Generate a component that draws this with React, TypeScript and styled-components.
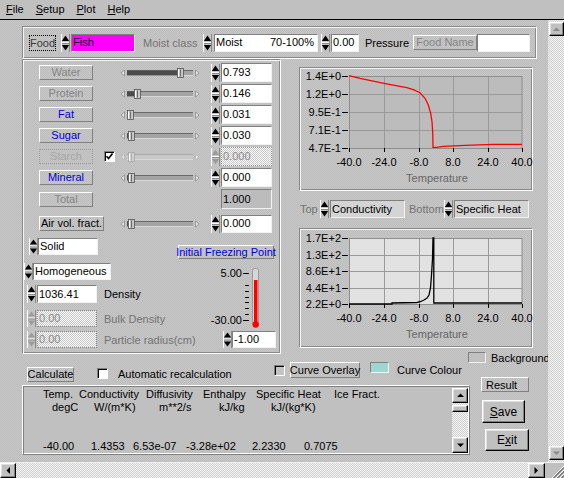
import React from "react";
import styled, { createGlobalStyle, css } from "styled-components";

type Box = { $ml?: number; $mt?: number; $w?: number; $h?: number };
const boxCss = css<Box>`
  ${(p) => (p.$ml !== undefined ? `margin-left: ${p.$ml}px;` : "")}
  ${(p) => (p.$mt !== undefined ? `margin-top: ${p.$mt}px;` : "")}
  ${(p) => (p.$w !== undefined ? `width: ${p.$w}px;` : "")}
  ${(p) => (p.$h !== undefined ? `height: ${p.$h}px;` : "")}
`;

const Global = createGlobalStyle`
  html, body { margin: 0; padding: 0; background: #c0c0c0; overflow: hidden; }
  body { font-family: "Liberation Sans", Arial, sans-serif; font-size: 11px; color: #000; }
  *, *::before, *::after { box-sizing: border-box; }
`;

const stipple = css`
  background-color: #c2c2c2;
  background-image: repeating-conic-gradient(#c7c7c7 0 25%, #bdbdbd 0 50%);
  background-size: 2px 2px;
`;
const checker = css`
  background-color: #e0e0e0;
  background-image: repeating-conic-gradient(#f4f4f4 0 25%, #cfcfcf 0 50%);
  background-size: 2px 2px;
`;
const raised1 = css`
  border: 1px solid;
  border-color: #ffffff #808080 #808080 #ffffff;
`;
const sunken1 = css`
  border: 1px solid;
  border-color: #808080 #f2f2f2 #f2f2f2 #808080;
`;
const etched = css`
  border: 1px solid;
  border-color: #8a8a8a #ffffff #ffffff #8a8a8a;
  box-shadow: inset 1px 1px #f4f4f4, inset -1px -1px #8a8a8a;
`;
const win95 = css`
  border: 1px solid;
  border-color: #ffffff #000000 #000000 #ffffff;
  box-shadow: inset -1px -1px #808080, inset 1px 1px #dfdfdf;
`;

const Window = styled.div`
  width: 564px;
  height: 478px;
  display: flex;
  flex-direction: column;
  overflow: hidden;
  background: #c0c0c0;
`;

const MenuBar = styled.div`
  flex: none;
  height: 20px;
  display: flex;
  gap: 12px;
  padding: 2px 0 0 6px;
  border-bottom: 1px solid #000;
  line-height: 14px;
  font-size: 11px;
`;
const MenuItem = styled.span`
  white-space: nowrap;
`;

const Body = styled.div`
  flex: none;
  height: 442px;
  display: flex;
`;

const Content = styled.div`
  flex: none;
  width: 548px;
  height: 442px;
  overflow: hidden;
  padding: 6px 0 0 22px;
  display: flex;
  flex-direction: column;
  ${stipple}
`;

/* ---------- generic controls ---------- */

const Field = styled.div<Box & { $kind?: "white" | "magenta" | "gray" | "light" | "hatch" }>`
  flex: none;
  height: 18px;
  ${sunken1}
  display: flex;
  align-items: center;
  justify-content: space-between;
  padding: 0 3px 0 1px;
  white-space: nowrap;
  overflow: hidden;
  line-height: 13px;
  background: ${(p) =>
    p.$kind === "magenta"
      ? "#ff00ff"
      : p.$kind === "gray"
      ? "#bcbcbc"
      : p.$kind === "light"
      ? "#d4d4d4"
      : "#ffffff"};
  ${(p) =>
    p.$kind === "hatch" &&
    css`
      border: 1px dotted #8c8c8c;
      color: #8a8a8a;
      background-color: #e0e0e0;
      background-image: repeating-conic-gradient(#ffffff 0 25%, #c4c4c4 0 50%);
      background-size: 2px 2px;
    `}
  ${boxCss}
`;

const PushButton = styled.div<Box & { $tone?: "off" | "blue" | "black" | "dotted" }>`
  flex: none;
  height: 15px;
  ${raised1}
  display: flex;
  align-items: center;
  justify-content: center;
  white-space: nowrap;
  line-height: 13px;
  color: ${(p) =>
    p.$tone === "blue" ? "#0000d8" : p.$tone === "off" ? "#858585" : p.$tone === "dotted" ? "#a6a6a6" : "#000"};
  ${(p) =>
    p.$tone === "dotted" &&
    css`
      border: 1px dotted #9c9c9c;
    `}
  ${boxCss}
`;

const FocusLabel = styled.div<Box>`
  flex: none;
  height: 16px;
  border: 1px dotted #000;
  display: flex;
  align-items: center;
  justify-content: center;
  color: #3a3a3a;
  ${boxCss}
`;

const Label = styled.span<Box & { $tone?: "gray" | "black" }>`
  flex: none;
  white-space: nowrap;
  line-height: 14px;
  color: ${(p) => (p.$tone === "gray" ? "#737373" : "#000")};
  ${boxCss}
`;

const CheckBox = styled.div<Box & { $bg?: string }>`
  flex: none;
  width: 11px;
  height: 11px;
  background: ${(p) => p.$bg ?? "#ffffff"};
  border: 1px solid;
  border-color: #808080 #ffffff #ffffff #808080;
  box-shadow: inset 1px 1px #000;
  display: flex;
  align-items: center;
  justify-content: center;
  ${boxCss}
`;

const DrawSvg = styled.svg`
  display: block;
  flex: none;
  overflow: visible;
`;

const SpinWrap = styled.div<Box>`
  flex: none;
  width: 9px;
  ${boxCss}
`;

function Spinner({ h = 18, ml, mt, off }: { h?: number; ml?: number; mt?: number; off?: boolean }) {
  const c = off ? "#9c9c9c" : "#000";
  const m = h / 2;
  return (
    <SpinWrap $ml={ml} $mt={mt} $h={h}>
      <DrawSvg width="9" height={h} viewBox={`0 0 9 ${h}`}>
        <rect x="0" y="0" width="9" height={h} fill="#c4c4c4" />
        <line x1="0.5" y1="0" x2="0.5" y2={h} stroke="#ffffff" />
        <line x1="8.5" y1="0" x2="8.5" y2={h} stroke="#8a8a8a" />
        <polygon points={`4.5,1.5 8.2,${m - 2} 0.8,${m - 2}`} fill={c} />
        <line x1="1" y1={m - 0.5} x2="8" y2={m - 0.5} stroke="#ffffff" />
        <line x1="1" y1={m + 0.5} x2="8" y2={m + 0.5} stroke="#8a8a8a" />
        <polygon points={`0.8,${m + 2} 8.2,${m + 2} 4.5,${h - 1.5}`} fill={c} />
      </DrawSvg>
    </SpinWrap>
  );
}

function Slider({ pos, off }: { pos: number; off?: boolean }) {
  const ar = off ? "#b4b4b4" : "#8c8c8c";
  return (
    <DrawSvg width="80" height="12" viewBox="0 0 80 12">
      <polygon points="4.5,3 1,6 4.5,9" fill="#e4e4e4" stroke={ar} strokeWidth="0.8" />
      <rect x="7" y="3.5" width="66" height="5" fill={off ? "#c8c8c8" : "#a4a4a4"} />
      <line x1="7" y1="3.5" x2="73" y2="3.5" stroke={off ? "#a8a8a8" : "#6a6a6a"} />
      <line x1="7" y1="8.5" x2="73" y2="8.5" stroke="#d8d8d8" />
      {!off && pos > 7 && <rect x="7" y="3.5" width={pos - 7} height="5" fill="#4c4c4c" />}
      <rect x={pos + 0.5} y="1.5" width="6" height="9" fill={off ? "#d0d0d0" : "#c6c6c6"} stroke={off ? "#a8a8a8" : "#555"} strokeWidth="0.8" />
      <line x1={pos + 1.5} y1="2.5" x2={pos + 1.5} y2="9.5" stroke="#ffffff" />
      <line x1={pos + 3.5} y1="2.5" x2={pos + 3.5} y2="9.5" stroke={off ? "#b0b0b0" : "#6a6a6a"} />
      <polygon points="75.5,3 79,6 75.5,9" fill="#e4e4e4" stroke={ar} strokeWidth="0.8" />
    </DrawSvg>
  );
}

function Tick() {
  return (
    <DrawSvg width="9" height="9" viewBox="0 0 9 9">
      <path d="M1.5 4.2 L3.6 6.6 L7.5 1.6" fill="none" stroke="#000" strokeWidth="1.6" />
    </DrawSvg>
  );
}

/* ---------- top panel ---------- */

const TopPanel = styled.div`
  flex: none;
  width: 515px;
  height: 33px;
  ${etched}
  display: flex;
  align-items: center;
  padding-left: 6px;
`;

/* ---------- left panel ---------- */

const MiddleRow = styled.div`
  flex: none;
  display: flex;
  align-items: flex-start;
`;

const LeftPanel = styled.div`
  flex: none;
  width: 259px;
  height: 295px;
  ${etched}
  padding: 3px 0 0 1px;
  display: flex;
  flex-direction: column;
`;

const ParamRow = styled.div<{ $mt?: number; $h?: number }>`
  display: grid;
  grid-template-columns: 81px 91px 10px 51px;
  align-items: center;
  height: ${(p) => p.$h ?? 19}px;
  margin-top: ${(p) => p.$mt ?? 0}px;
  padding-left: 15px;
`;

const ButtonCell = styled.div`
  display: flex;
  align-items: center;
`;

const LowerArea = styled.div`
  display: flex;
  margin-top: 5px;
`;
const LeftStack = styled.div`
  flex: none;
  width: 154px;
  display: flex;
  flex-direction: column;
`;
const RightStack = styled.div`
  flex: none;
  width: 98px;
  display: flex;
  flex-direction: column;
`;
const InlineRow = styled.div<Box>`
  display: flex;
  align-items: center;
  ${boxCss}
`;

/* ---------- plots ---------- */

const PlotColumn = styled.div`
  flex: none;
  margin: 8px 0 0 18px;
  display: flex;
  flex-direction: column;
`;

const PlotFrame = styled.div<Box>`
  flex: none;
  width: 234px;
  ${etched}
  ${boxCss}
`;

const SelectorRow = styled.div`
  display: flex;
  align-items: center;
  height: 18px;
  margin-top: 9px;
`;

const GRID_X = [49, 84, 119, 153, 188, 222];
const X_LABELS = ["-40.0", "-24.0", "-8.0", "8.0", "24.0", "40.0"];

function Plot({
  height,
  top,
  bottom,
  labels,
  fill,
  points,
  stroke,
}: {
  height: number;
  top: number;
  bottom: number;
  labels: string[];
  fill: string;
  points: string;
  stroke: string;
}) {
  const ys = labels.map((_, i) => top + ((bottom - top) * i) / (labels.length - 1));
  return (
    <DrawSvg width="232" height={height} viewBox={`0 0 232 ${height}`} fontFamily="Liberation Sans, Arial, sans-serif" fontSize="11">
      <rect x="49" y={top} width="173" height={bottom - top} fill={fill} />
      {GRID_X.slice(1, -1).map((x) => (
        <line key={x} x1={x + 0.5} y1={top} x2={x + 0.5} y2={bottom} stroke="#9a9a9a" />
      ))}
      {ys.slice(1, -1).map((y) => (
        <line key={y} x1="49" y1={Math.round(y) + 0.5} x2="222" y2={Math.round(y) + 0.5} stroke="#9a9a9a" />
      ))}
      <rect x="49.5" y={top + 0.5} width="172.5" height={bottom - top} fill="none" stroke="#8e8e8e" />
      {ys.map((y, i) => (
        <g key={labels[i]}>
          <line x1="42" y1={Math.round(y) + 0.5} x2="48" y2={Math.round(y) + 0.5} stroke="#000" />
          <text x="41" y={y + 4} textAnchor="end" fill="#000">
            {labels[i]}
          </text>
        </g>
      ))}
      {GRID_X.map((x, i) => (
        <g key={x}>
          <line x1={x + 0.5} y1={bottom} x2={x + 0.5} y2={bottom + 4} stroke="#000" />
          <text x={x} y={bottom + 18} textAnchor="middle" fill="#000">
            {X_LABELS[i]}
          </text>
        </g>
      ))}
      <text x="137" y={bottom + 34} textAnchor="middle" fill="#666">
        Temperature
      </text>
      <polyline points={points} fill="none" stroke={stroke} strokeWidth="1.3" />
    </DrawSvg>
  );
}

const TOP_CURVE =
  "49,7.7 60,10.3 84,15.3 106.7,19.7 113.3,21.7 120,24.7 125,30.3 128.3,37 130.7,45.3 132,53.7 132.7,63.7 133,79.3 136.7,79.3 143.3,78.3 165,77.3 193.3,76.3 222,76.3";
const BOTTOM_CURVE =
  "49,75 92,75 92,74 117,73.5 121,72.5 124,71 127,69 129,66 130.5,59 131.5,46 132.5,30 133,9 133.8,9 133.8,74 222,74";

/* ---------- bottom area ---------- */

const BottomRow = styled.div`
  flex: none;
  display: flex;
  align-items: flex-start;
  margin-top: -2px;
`;
const BottomLeft = styled.div`
  flex: none;
  width: 448px;
  display: flex;
  flex-direction: column;
`;
const ControlsRow = styled.div`
  display: flex;
  align-items: flex-start;
  height: 20px;
  margin-top: 10px;
`;
const Swatch = styled.div<Box & { $color: string }>`
  flex: none;
  background: ${(p) => p.$color};
  ${sunken1}
  ${boxCss}
`;
const FlatLabel = styled.div<Box>`
  flex: none;
  height: 16px;
  background: #bfbfbf;
  display: flex;
  align-items: center;
  padding-left: 2px;
  white-space: nowrap;
  ${boxCss}
`;

const TableFrame = styled.div`
  flex: none;
  width: 448px;
  height: 70px;
  margin-top: 3px;
  border: 1px solid;
  border-color: #ffffff #808080 #808080 #ffffff;
  box-shadow: inset 1px 1px #808080, inset -1px -1px #ffffff;
  padding: 2px 1px 1px 1px;
  display: flex;
  background: #c0c0c0;
`;
const TableText = styled.div`
  flex: 1;
  padding: 0 0 0 19px;
  display: flex;
  flex-direction: column;
  line-height: 13px;
  overflow: hidden;
`;
const TextLine = styled.div<Box>`
  display: flex;
  white-space: nowrap;
  height: 13px;
  ${boxCss}
`;
const Cell = styled.span<{ $w?: number }>`
  flex: none;
  ${(p) => (p.$w !== undefined ? `width: ${p.$w}px;` : "")}
`;
const Rule = styled.div`
  height: 1px;
  background: #000;
  margin: 12px 0 0 -4px;
`;

const MiniScroll = styled.div`
  flex: none;
  width: 16px;
  display: flex;
  flex-direction: column;
  ${checker}
`;
const ScrollBtn = styled.div<Box>`
  flex: none;
  ${win95}
  background: #c0c0c0;
  display: flex;
  align-items: center;
  justify-content: center;
  ${boxCss}
`;
const Thumb = styled.div`
  flex: none;
  height: 7px;
  margin-top: 2px;
  ${win95}
  background: #c0c0c0;
`;
const Filler = styled.div`
  flex: 1;
`;

const BottomRight = styled.div`
  flex: none;
  width: 82px;
  margin-left: -2px;
  display: flex;
  flex-direction: column;
`;
const BgRow = styled.div`
  display: flex;
  align-items: center;
  height: 11px;
`;
const ResultBox = styled.div<Box>`
  flex: none;
  height: 15px;
  ${raised1}
  display: flex;
  align-items: center;
  padding-left: 4px;
  line-height: 12px;
  ${boxCss}
`;
const BigButton = styled.div<Box>`
  flex: none;
  ${win95}
  background: #c0c0c0;
  display: flex;
  align-items: center;
  justify-content: center;
  font-size: 12px;
  ${boxCss}
`;

/* ---------- window scrollbars ---------- */

const VScroll = styled.div`
  flex: none;
  width: 16px;
  height: 442px;
  display: flex;
  flex-direction: column;
  padding: 2px 0 2px 1px;
  ${checker}
`;
const HScroll = styled.div`
  flex: none;
  height: 16px;
  display: flex;
  border-top: 1px solid #f0f0f0;
`;
const HTrack = styled.div`
  flex: 1;
  ${checker}
`;
const Corner = styled.div`
  flex: none;
  width: 19px;
  background: #c0c0c0;
  display: flex;
  align-items: flex-end;
  justify-content: flex-end;
`;

function Arrow({ dir, color = "#000" }: { dir: "up" | "down" | "left" | "right"; color?: string }) {
  const pts =
    dir === "up"
      ? "1,5 4.5,1.5 8,5"
      : dir === "down"
      ? "1,1.5 8,1.5 4.5,5"
      : dir === "left"
      ? "5,1 1.5,4.5 5,8"
      : "1.5,1 5,4.5 1.5,8";
  const w = dir === "up" || dir === "down" ? 9 : 7;
  const h = dir === "up" || dir === "down" ? 7 : 9;
  return (
    <DrawSvg width={w} height={h} viewBox={`0 0 ${w} ${h}`}>
      <polygon points={pts} fill={color} />
    </DrawSvg>
  );
}

function Grip() {
  return (
    <DrawSvg width="14" height="14" viewBox="0 0 14 14">
      {[2, 6, 10].map((o) => (
        <g key={o}>
          <line x1={o} y1="14" x2="14" y2={o} stroke="#ffffff" />
          <line x1={o + 1} y1="14" x2="14" y2={o + 1} stroke="#808080" />
          <line x1={o + 2} y1="14" x2="14" y2={o + 2} stroke="#808080" />
        </g>
      ))}
    </DrawSvg>
  );
}

const PARAMS = [
  { label: "Water", tone: "off" as const, pos: 57, val: "0.793" },
  { label: "Protein", tone: "off" as const, pos: 14, val: "0.146" },
  { label: "Fat", tone: "blue" as const, pos: 7, val: "0.031" },
  { label: "Sugar", tone: "blue" as const, pos: 8, val: "0.030" },
  { label: "Starch", tone: "dotted" as const, pos: 8, val: "0.000", off: true },
  { label: "Mineral", tone: "blue" as const, pos: 8, val: "0.000" },
];

export default function App() {
  return (
    <>
      <Global />
      <Window>
        <MenuBar>
          {["File", "Setup", "Plot", "Help"].map((m) => (
            <MenuItem key={m}>
              <u>{m[0]}</u>
              {m.slice(1)}
            </MenuItem>
          ))}
        </MenuBar>
        <Body>
          <Content>
            <TopPanel>
              <FocusLabel $w={27}>Food</FocusLabel>
              <Spinner ml={5} />
              <Field $kind="magenta" $w={64} $ml={1}>
                Fish
              </Field>
              <Label $tone="gray" $ml={8} $w={60}>
                Moist class
              </Label>
              <Spinner />
              <Field $w={104} $ml={2}>
                <span>Moist</span>
                <span>70-100%</span>
              </Field>
              <Spinner ml={3} />
              <Field $w={28} $ml={1}>
                0.00
              </Field>
              <Label $ml={6} $w={48}>
                Pressure
              </Label>
              <PushButton $tone="off" $w={64}>
                Food Name
              </PushButton>
              <Field $w={53} />
            </TopPanel>

            <MiddleRow>
              <LeftPanel>
                {PARAMS.map((p, i) => (
                  <ParamRow key={p.label} $mt={i === 0 ? 0 : 2}>
                    <ButtonCell>
                      <PushButton $tone={p.tone} $w={54}>
                        {p.label}
                      </PushButton>
                      {p.off && (
                        <CheckBox $ml={11}>
                          <Tick />
                        </CheckBox>
                      )}
                    </ButtonCell>
                    <Slider pos={p.pos} off={p.off} />
                    <Spinner off={p.off} />
                    <Field $kind={p.off ? "hatch" : "white"} $h={19}>
                      {p.val}
                    </Field>
                  </ParamRow>
                ))}
                <ParamRow $mt={2} $h={20}>
                  <ButtonCell>
                    <PushButton $tone="off" $w={54}>
                      Total
                    </PushButton>
                  </ButtonCell>
                  <span />
                  <span />
                  <Field $kind="gray" $h={20}>
                    1.000
                  </Field>
                </ParamRow>
                <ParamRow $mt={5}>
                  <ButtonCell>
                    <PushButton $tone="black" $w={65}>
                      Air vol. fract.
                    </PushButton>
                  </ButtonCell>
                  <Slider pos={8} />
                  <Spinner />
                  <Field $h={18}>0.000</Field>
                </ParamRow>

                <LowerArea>
                  <LeftStack>
                    <InlineRow>
                      <Spinner h={17} ml={5} />
                      <Field $w={60} $h={17}>
                        Solid
                      </Field>
                    </InlineRow>
                    <InlineRow $mt={8}>
                      <Spinner h={17} />
                      <Field $w={78} $h={17}>
                        Homogeneous
                      </Field>
                    </InlineRow>
                    <InlineRow $mt={5}>
                      <Spinner h={18} ml={3} />
                      <Field $w={60} $h={18} $ml={1}>
                        1036.41
                      </Field>
                      <Label $ml={7}>Density</Label>
                    </InlineRow>
                    <InlineRow $mt={7}>
                      <Spinner h={17} ml={3} off />
                      <Field $kind="hatch" $w={60} $h={17} $ml={1}>
                        0.00
                      </Field>
                      <Label $tone="gray" $ml={7}>
                        Bulk Density
                      </Label>
                    </InlineRow>
                    <InlineRow $mt={4}>
                      <Spinner h={17} ml={3} off />
                      <Field $kind="hatch" $w={60} $h={17} $ml={1}>
                        0.00
                      </Field>
                      <Label $tone="gray" $ml={7}>
                        Particle radius(cm)
                      </Label>
                    </InlineRow>
                  </LeftStack>
                  <RightStack>
                    <PushButton $tone="blue" $w={96} $h={14} $mt={7}>
                      Initial Freezing Point
                    </PushButton>
                    <InlineRow $mt={5} $ml={22}>
                      <DrawSvg width="62" height="66" viewBox="0 0 62 66" fontFamily="Liberation Sans, Arial, sans-serif" fontSize="11">
                        <text x="42" y="13" textAnchor="end" fill="#000">
                          5.00
                        </text>
                        <text x="42" y="60" textAnchor="end" fill="#000">
                          -30.00
                        </text>
                        {[9, 56].map((y) => (
                          <line key={y} x1="43" y1={y + 0.5} x2="49" y2={y + 0.5} stroke="#000" />
                        ))}
                        {[21, 27, 33, 38, 44, 50].map((y) => (
                          <line key={y} x1="45" y1={y + 0.5} x2="49" y2={y + 0.5} stroke="#000" />
                        ))}
                        <rect x="52.5" y="4.5" width="6" height="56" rx="2" fill="#d6d6d6" stroke="#9a9a9a" />
                        <rect x="54" y="16" width="3.5" height="44" fill="#ff0000" />
                        <circle cx="55.7" cy="60.5" r="3.2" fill="#ff0000" />
                      </DrawSvg>
                    </InlineRow>
                    <InlineRow $mt={1}>
                      <Spinner h={17} ml={45} />
                      <Field $w={44} $h={17}>
                        -1.00
                      </Field>
                    </InlineRow>
                  </RightStack>
                </LowerArea>
              </LeftPanel>

              <PlotColumn>
                <PlotFrame $h={124}>
                  <Plot
                    height={122}
                    top={8}
                    bottom={80}
                    labels={["1.4E+0", "1.2E+0", "9.5E-1", "7.1E-1", "4.7E-1"]}
                    fill="#bcbcbc"
                    points={TOP_CURVE}
                    stroke="#ff0000"
                  />
                </PlotFrame>
                <SelectorRow>
                  <Label $tone="gray" $ml={1} $w={20}>
                    Top
                  </Label>
                  <Spinner />
                  <Field $kind="light" $w={75} $ml={1}>
                    Conductivity
                  </Field>
                  <Label $tone="gray" $ml={4} $w={35}>
                    Bottom
                  </Label>
                  <Spinner />
                  <Field $kind="light" $w={75} $ml={1}>
                    Specific Heat
                  </Field>
                </SelectorRow>
                <PlotFrame $h={120} $mt={10}>
                  <Plot
                    height={118}
                    top={9}
                    bottom={75}
                    labels={["1.7E+2", "1.3E+2", "8.6E+1", "4.4E+1", "2.2E+0"]}
                    fill="#e2e2e2"
                    points={BOTTOM_CURVE}
                    stroke="#000"
                  />
                </PlotFrame>
              </PlotColumn>
            </MiddleRow>

            <BottomRow>
              <BottomLeft>
                <ControlsRow>
                  <PushButton $tone="black" $w={47} $ml={5} $mt={5}>
                    Calculate
                  </PushButton>
                  <CheckBox $ml={23} $mt={6} />
                  <Label $ml={10} $mt={5} $w={156}>
                    Automatic recalculation
                  </Label>
                  <CheckBox $mt={3} $bg="#c4c4c4" />
                  <PushButton $tone="black" $w={70} $h={16} $ml={5}>
                    Curve Overlay
                  </PushButton>
                  <Swatch $color="#9fd6cf" $w={19} $h={11} $ml={10} />
                  <FlatLabel $ml={6} $w={64}>
                    Curve Colour
                  </FlatLabel>
                </ControlsRow>
                <TableFrame>
                  <TableText>
                    <TextLine>
                      <Cell $w={36}>Temp.</Cell>
                      <Cell $w={67}>Conductivity</Cell>
                      <Cell $w={57}>Diffusivity</Cell>
                      <Cell $w={53}>Enthalpy</Cell>
                      <Cell $w={78}>Specific Heat</Cell>
                      <Cell>Ice Fract.</Cell>
                    </TextLine>
                    <TextLine $ml={9}>
                      <Cell $w={42}>degC</Cell>
                      <Cell $w={65}>W/(m*K)</Cell>
                      <Cell $w={60}>m**2/s</Cell>
                      <Cell $w={52}>kJ/kg</Cell>
                      <Cell>kJ/(kg*K)</Cell>
                    </TextLine>
                    <Rule />
                    <TextLine $mt={14}>
                      <Cell $w={48}>-40.00</Cell>
                      <Cell $w={42}>1.4353</Cell>
                      <Cell $w={53}>6.53e-07</Cell>
                      <Cell $w={66}>-3.28e+02</Cell>
                      <Cell $w={52}>2.2330</Cell>
                      <Cell>0.7075</Cell>
                    </TextLine>
                  </TableText>
                  <MiniScroll>
                    <ScrollBtn $h={15}>
                      <Arrow dir="up" />
                    </ScrollBtn>
                    <Thumb />
                    <Filler />
                    <ScrollBtn $h={16}>
                      <Arrow dir="down" />
                    </ScrollBtn>
                  </MiniScroll>
                </TableFrame>
              </BottomLeft>
              <BottomRight>
                <BgRow>
                  <Swatch $color="#c0c0c0" $w={18} $h={11} />
                  <Label $ml={5}>Background</Label>
                </BgRow>
                <ResultBox $w={48} $ml={13} $mt={14}>
                  Result
                </ResultBox>
                <BigButton $w={43} $h={23} $ml={14} $mt={8}>
                  <span>
                    <u>S</u>ave
                  </span>
                </BigButton>
                <BigButton $w={44} $h={22} $ml={17} $mt={6}>
                  <span>
                    E<u>x</u>it
                  </span>
                </BigButton>
              </BottomRight>
            </BottomRow>
          </Content>
          <VScroll>
            <ScrollBtn $w={15} $h={14}>
              <Arrow dir="up" color="#8a8a8a" />
            </ScrollBtn>
            <Filler />
            <ScrollBtn $w={15} $h={14}>
              <Arrow dir="down" color="#8a8a8a" />
            </ScrollBtn>
          </VScroll>
        </Body>
        <HScroll>
          <ScrollBtn $w={16}>
            <Arrow dir="left" />
          </ScrollBtn>
          <HTrack />
          <ScrollBtn $w={17}>
            <Arrow dir="right" />
          </ScrollBtn>
          <Corner>
            <Grip />
          </Corner>
        </HScroll>
      </Window>
    </>
  );
}
